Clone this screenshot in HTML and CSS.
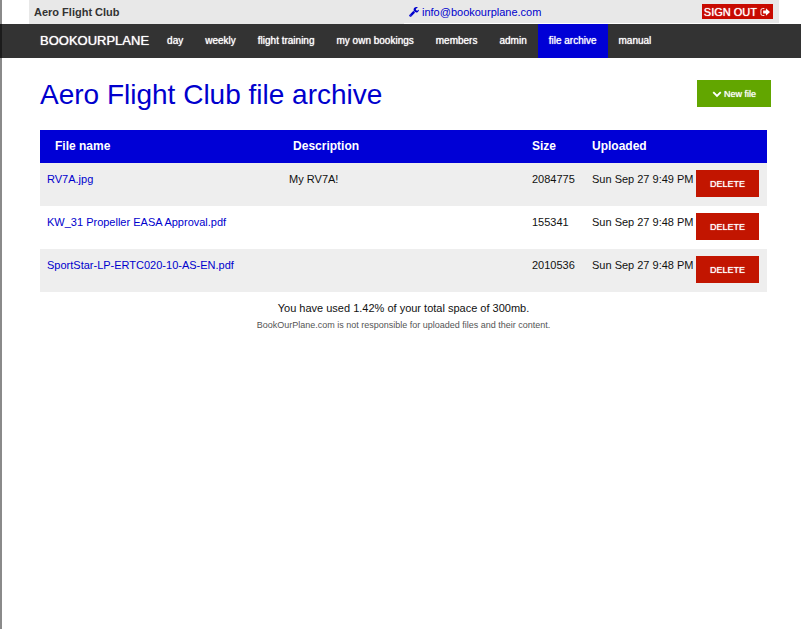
FILE: index.html
```html
<!DOCTYPE html>
<html lang="en">
<head>
    <meta charset="UTF-8">
    <meta name="viewport" content="width=device-width, initial-scale=1.0">
    <title>Aero Flight Club file archive</title>
    <link rel="stylesheet" href="styles.css">
</head>
<body>
    <header class="top-bar">
        <strong class="club">Aero Flight Club</strong>
        <div class="account">
            <a class="support" href="mailto:info@bookourplane.com">
                <svg class="icon" viewBox="0 0 1664 1664" aria-hidden="true"><path fill="currentColor" d="M384 1344q0-26-19-45t-45-19-45 19-19 45 19 45 45 19 45-19 19-45zm644-420l-682 682q-37 37-90 37-52 0-91-37L59 1498q-38-36-38-90 0-53 38-91l681-681q39 98 114.500 173.500T1028 924zm634-435q0 39-23 106-47 134-164.500 217.500T1216 896q-185 0-316.500-131.500T768 448t131.500-316.500T1216 0q58 0 121.500 16.500T1445 63q16 11 16 28t-16 28l-293 169v224l193 107q5-3 79-48.500t135.500-81T1630 454q15 0 23.500 10t8.500 25z"/></svg>
                info@bookourplane.com
            </a>
            <a class="sign-out" href="#signout">
                SIGN OUT
                <svg class="icon" viewBox="0 0 16 16" aria-hidden="true"><path fill="none" stroke="currentColor" stroke-width="1.500" d="M7 2.500H4Q1.500 2.500 1.500 5v6q0 2.500 2.500 2.500h3"/><path fill="currentColor" d="M5 5.500h4.500V2L16 8l-6.500 6v-3.500H5z"/></svg>
            </a>
        </div>
    </header>
    <nav class="main-nav">
        <a class="brand" href="#home">BOOKOURPLANE</a>
        <a href="#day">day</a>
        <a href="#weekly">weekly</a>
        <a href="#training">flight training</a>
        <a href="#bookings">my own bookings</a>
        <a href="#members">members</a>
        <a href="#admin">admin</a>
        <a class="active" href="#files">file archive</a>
        <a href="#manual">manual</a>
    </nav>
    <main class="container">
        <div class="title-row">
            <h1>Aero Flight Club file archive</h1>
            <button class="btn new-file" type="button">
                <svg class="icon" viewBox="0 0 16 16" aria-hidden="true"><path fill="none" stroke="currentColor" stroke-width="3" d="M2 5l6 6 6-6"/></svg>
                New file
            </button>
        </div>
        <table class="files">
            <thead>
                <tr>
                    <th class="col-name">File name</th>
                    <th class="col-description">Description</th>
                    <th class="col-size">Size</th>
                    <th class="col-uploaded">Uploaded</th>
                </tr>
            </thead>
            <tbody>
                <tr>
                    <td><a href="#rv7a">RV7A.jpg</a></td>
                    <td>My RV7A!</td>
                    <td>2084775</td>
                    <td><div class="uploaded">Sun Sep 27 9:49 PM <button class="btn delete" type="button">DELETE</button></div></td>
                </tr>
                <tr>
                    <td><a href="#kw31">KW_31 Propeller EASA Approval.pdf</a></td>
                    <td></td>
                    <td>155341</td>
                    <td><div class="uploaded">Sun Sep 27 9:48 PM <button class="btn delete" type="button">DELETE</button></div></td>
                </tr>
                <tr>
                    <td><a href="#sportstar">SportStar-LP-ERTC020-10-AS-EN.pdf</a></td>
                    <td></td>
                    <td>2010536</td>
                    <td><div class="uploaded">Sun Sep 27 9:48 PM <button class="btn delete" type="button">DELETE</button></div></td>
                </tr>
            </tbody>
        </table>
        <p class="usage">You have used 1.42% of your total space of 300mb.</p>
        <p class="disclaimer">BookOurPlane.com is not responsible for uploaded files and their content.</p>
    </main>
</body>
</html>
```
FILE: styles.css
```css
* {
    box-sizing: border-box;
}
body {
    font-family: "Liberation Sans", Arial, sans-serif;
    font-size: 11px;
    line-height: 16px;
    margin: 0;
    background-color: #fff;
    color: #111;
}
/* shaded window edge */
body::before {
    content: "";
    position: fixed;
    top: 0;
    bottom: 0;
    left: 0;
    width: 2px;
    background-color: rgba(0, 0, 0, 0.46);
}
a {
    color: #0000cd;
    text-decoration: none;
}
.icon {
    width: 10px;
    height: 10px;
    flex: none;
}
.top-bar {
    display: grid;
    grid-template-columns: 1fr 1fr;
    margin: 0 22px 0 29px;
    height: 24px;
    background-color: #e8e8e8;
}
.club {
    padding: 4px 5px;
    color: #333;
}
.account {
    display: flex;
    justify-content: space-between;
    align-items: center;
    padding: 0 6px 0 5px;
    border-bottom: 1px solid #fff;
}
.support,
.sign-out {
    display: flex;
    align-items: center;
    gap: 3px;
}
.sign-out {
    height: 15px;
    padding: 0 3px 0 2px;
    background-color: #c80a00;
    color: #fff;
    text-shadow: 0 0 1px #fff;
}
.main-nav {
    display: flex;
    height: 34px;
    padding-left: 29px;
    background-color: #333;
}
.main-nav a {
    padding: 0 11px;
    color: #fff;
    font-size: 10px;
    line-height: 34px;
    text-shadow: 0 0 1px #fff;
}
.main-nav .brand {
    padding-right: 7px;
    font-size: 13px;
}
.main-nav .active {
    background-color: #0000d6;
}
.container {
    padding: 20px 34px 0 40px;
}
.title-row {
    display: flex;
    justify-content: space-between;
    align-items: flex-start;
    margin: 0 -4px 0 0;
}
h1 {
    margin: 0;
    font-size: 28px;
    font-weight: normal;
    line-height: 34px;
    color: #0000cd;
}
.btn {
    height: 27px;
    padding: 0 15px;
    border: 0;
    font-family: inherit;
    font-size: 9px;
    color: #fff;
    text-shadow: 0 0 1px #fff;
}
.new-file {
    display: flex;
    align-items: center;
    gap: 2px;
    margin-top: 2px;
    background-color: #62a600;
}
.files {
    width: 100%;
    margin-top: 18px;
    border-collapse: collapse;
    table-layout: fixed;
}
.files th {
    height: 33px;
    padding: 0 15px 2px;
    background-color: #0000d6;
    color: #fff;
    font-size: 12px;
    text-align: left;
}
.files .col-description {
    padding-left: 11px;
}
.files .col-size,
.files .col-uploaded {
    padding-left: 7px;
}
.col-name {
    width: 33.3%;
}
.col-size {
    width: 60px;
}
.col-uploaded {
    width: 182px;
}
.files td {
    height: 43px;
    padding: 7px 8px 7px 7px;
    line-height: 18px;
    vertical-align: top;
}
.files tbody tr:nth-child(odd) {
    background-color: #eee;
}
.files a {
    white-space: nowrap;
}
.uploaded {
    display: flex;
    justify-content: space-between;
    white-space: nowrap;
}
.delete {
    padding: 0 14px;
    background-color: #c21500;
}
.usage,
.disclaimer {
    margin: 0;
    text-align: center;
}
.usage {
    margin-top: 8px;
}
.disclaimer {
    font-size: 9px;
    line-height: 18px;
    color: #555;
}
```
